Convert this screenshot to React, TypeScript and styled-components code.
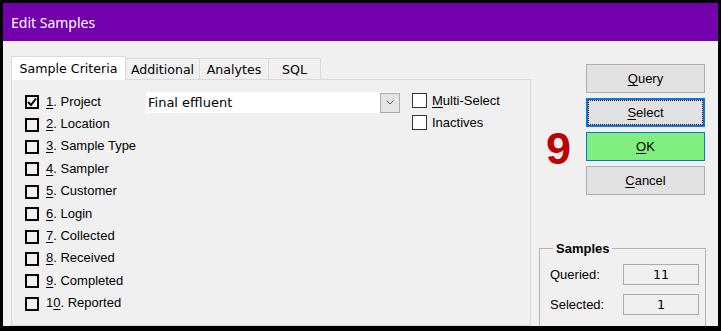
import React from "react";
import styled, { createGlobalStyle } from "styled-components";

const Global = createGlobalStyle`
  html, body { margin: 0; padding: 0; background: #000; }
  #root { width: 721px; height: 331px; }
`;

const Window = styled.div`
  width: 721px;
  height: 331px;
  box-sizing: border-box;
  border: 3px solid #000;
  border-bottom-width: 5px;
  background: #f0f0f0;
  display: flex;
  flex-direction: column;
  overflow: hidden;
`;

const TitleBar = styled.div`
  height: 38px;
  flex-shrink: 0;
  background: #7200ac;
  color: #fff;
  font-family: "Noto Sans", sans-serif;
  font-size: 14px;
  display: flex;
  align-items: center;
  padding-left: 8px;
`;

const Body = styled.div`
  flex: 1;
  min-height: 0;
  display: flex;
`;

const LeftPane = styled.div`
  width: 520px;
  margin-left: 8px;
  padding-top: 15px;
  display: flex;
  flex-direction: column;
`;

const TabStrip = styled.div`
  display: flex;
  align-items: flex-end;
  height: 24px;
  margin-bottom: -1px;
  position: relative;
  z-index: 1;
`;

const Tab = styled.div<{ $active?: boolean; $w: number }>`
  box-sizing: border-box;
  width: ${(p) => p.$w}px;
  height: ${(p) => (p.$active ? 24 : 22)}px;
  margin-left: ${(p) => (p.$active ? 0 : -1)}px;
  border: 1px solid #d9d9d9;
  border-bottom: ${(p) => (p.$active ? "none" : "1px solid #d9d9d9")};
  background: ${(p) => (p.$active ? "#ffffff" : "#f0f0f0")};
  font-family: "DejaVu Sans", sans-serif;
  font-size: 12.6px;
  color: #000;
  display: flex;
  align-items: center;
  justify-content: center;
  position: relative;
  z-index: ${(p) => (p.$active ? 2 : 1)};
`;

const Panel = styled.div`
  flex: 1;
  border: 1px solid #d9d9d9;
  background: #f0f0f0;
  display: flex;
  align-items: flex-start;
  padding: 10px 0 0 13px;
`;

const CriteriaList = styled.div`
  width: 121px;
  display: flex;
  flex-direction: column;
`;

const CriteriaRow = styled.div`
  height: 22.4px;
  display: flex;
  align-items: center;
  gap: 7px;
`;

const Label = styled.span`
  font-family: "Liberation Sans", Arial, sans-serif;
  font-size: 13px;
  color: #000;
  white-space: nowrap;
`;

const Key = styled.u`
  text-decoration: underline;
  text-underline-offset: 2px;
`;

const ClassicBox = styled.span`
  box-sizing: border-box;
  width: 14px;
  height: 14px;
  margin-top: 2px;
  border: 2px solid #000;
  display: flex;
  align-items: center;
  justify-content: center;
  flex-shrink: 0;
`;

const Combo = styled.div`
  margin-top: 2px;
  width: 254px;
  height: 21px;
  background: #fff;
  display: flex;
  align-items: center;
`;

const ComboText = styled.span`
  flex: 1;
  padding-left: 2px;
  font-family: "DejaVu Sans", sans-serif;
  font-size: 13px;
  color: #000;
`;

const DropButton = styled.span`
  box-sizing: border-box;
  width: 20px;
  height: 20px;
  border: 1px solid #acacac;
  background: #e5e5e5;
  display: flex;
  align-items: center;
  justify-content: center;
`;

const OptionsColumn = styled.div`
  margin-left: 12px;
  margin-top: -1px;
  display: flex;
  flex-direction: column;
`;

const OptionRow = styled.div`
  height: 22px;
  display: flex;
  align-items: center;
  gap: 5px;
`;

const FlatBox = styled.span`
  box-sizing: border-box;
  width: 15px;
  height: 15px;
  border: 1px solid #333;
  background: #fff;
  flex-shrink: 0;
`;

const RightPane = styled.div`
  width: 187px;
  box-sizing: border-box;
  padding: 23px 13px 0 8px;
  display: flex;
  flex-direction: column;
  overflow: hidden;
`;

const ActionRow = styled.div`
  display: flex;
  align-items: flex-start;
`;

const Nine = styled.div`
  margin-left: 7px;
  margin-top: 62px;
  font-family: "Liberation Sans", Arial, sans-serif;
  font-weight: bold;
  font-size: 45px;
  line-height: 1;
  color: #c00000;
`;

const ButtonColumn = styled.div`
  margin-left: auto;
  width: 119px;
  display: flex;
  flex-direction: column;
  gap: 5px;
`;

const Button = styled.div<{ $variant?: "focus" | "ok" }>`
  box-sizing: border-box;
  height: 29px;
  display: flex;
  align-items: center;
  justify-content: center;
  font-family: "Liberation Sans", Arial, sans-serif;
  font-size: 13px;
  color: #000;
  background: ${(p) => (p.$variant === "ok" ? "#80ef80" : "#e1e1e1")};
  border: ${(p) =>
    p.$variant === "focus"
      ? "2px solid #0078d7"
      : p.$variant === "ok"
      ? "1px solid #0078d7"
      : "1px solid #adadad"};
  outline: ${(p) => (p.$variant === "focus" ? "1px dotted #000" : "none")};
  outline-offset: -3px;
`;

const Group = styled.fieldset`
  margin: 46px 0 0 0;
  height: 110px;
  flex-shrink: 0;
  box-sizing: border-box;
  border: 1px solid #b4b4b4;
  padding: 8px 6px 0 10px;
  display: flex;
  flex-direction: column;
  gap: 9px;
`;

const Legend = styled.legend`
  margin-left: 3px;
  padding: 0 3px;
  font-family: "Liberation Sans", Arial, sans-serif;
  font-weight: bold;
  font-size: 13px;
  line-height: 15px;
  color: #000;
`;

const GroupRow = styled.div`
  height: 21px;
  display: flex;
  align-items: center;
`;

const GroupLabel = styled(Label)`
  width: 73px;
`;

const ValueBox = styled.div`
  box-sizing: border-box;
  width: 76px;
  height: 21px;
  border: 1px solid #acacac;
  display: flex;
  align-items: center;
  justify-content: center;
  font-family: "DejaVu Sans", sans-serif;
  font-size: 12.6px;
  color: #000;
`;

const criteria: { key: string; rest: string; prefix?: string; checked?: boolean }[] = [
  { key: "1", rest: ". Project", checked: true },
  { key: "2", rest: ". Location" },
  { key: "3", rest: ". Sample Type" },
  { key: "4", rest: ". Sampler" },
  { key: "5", rest: ". Customer" },
  { key: "6", rest: ". Login" },
  { key: "7", rest: ". Collected" },
  { key: "8", rest: ". Received" },
  { key: "9", rest: ". Completed" },
  { prefix: "1", key: "0", rest: ". Reported" },
];

const tabs = [
  { label: "Sample Criteria", w: 115, active: true },
  { label: "Additional", w: 75 },
  { label: "Analytes", w: 70 },
  { label: "SQL", w: 53 },
];

export default function App() {
  return (
    <>
      <Global />
      <Window>
        <TitleBar>Edit Samples</TitleBar>
        <Body>
          <LeftPane>
            <TabStrip>
              {tabs.map((t) => (
                <Tab key={t.label} $active={t.active} $w={t.w}>
                  {t.label}
                </Tab>
              ))}
            </TabStrip>
            <Panel>
              <CriteriaList>
                {criteria.map((c) => (
                  <CriteriaRow key={c.rest}>
                    <ClassicBox>
                      {c.checked && (
                        <svg width="10" height="10" viewBox="0 0 10 10">
                          <path d="M1 5 L4 8 L9 1.5" fill="none" stroke="#000" strokeWidth="2" />
                        </svg>
                      )}
                    </ClassicBox>
                    <Label>
                      {c.prefix}
                      <Key>{c.key}</Key>
                      {c.rest}
                    </Label>
                  </CriteriaRow>
                ))}
              </CriteriaList>
              <Combo>
                <ComboText>Final effluent</ComboText>
                <DropButton>
                  <svg width="8" height="5" viewBox="0 0 8 5">
                    <path d="M0.5 0.5 L4 4 L7.5 0.5" fill="none" stroke="#606060" strokeWidth="1" />
                  </svg>
                </DropButton>
              </Combo>
              <OptionsColumn>
                <OptionRow>
                  <FlatBox />
                  <Label>
                    <Key>M</Key>ulti-Select
                  </Label>
                </OptionRow>
                <OptionRow>
                  <FlatBox />
                  <Label>Inactives</Label>
                </OptionRow>
              </OptionsColumn>
            </Panel>
          </LeftPane>
          <RightPane>
            <ActionRow>
              <Nine>9</Nine>
              <ButtonColumn>
                <Button>
                  <Key>Q</Key>uery
                </Button>
                <Button $variant="focus">
                  <Key>S</Key>elect
                </Button>
                <Button $variant="ok">
                  <Key>O</Key>K
                </Button>
                <Button>
                  <Key>C</Key>ancel
                </Button>
              </ButtonColumn>
            </ActionRow>
            <Group>
              <Legend>Samples</Legend>
              <GroupRow>
                <GroupLabel>Queried:</GroupLabel>
                <ValueBox>11</ValueBox>
              </GroupRow>
              <GroupRow>
                <GroupLabel>Selected:</GroupLabel>
                <ValueBox>1</ValueBox>
              </GroupRow>
            </Group>
          </RightPane>
        </Body>
      </Window>
    </>
  );
}
